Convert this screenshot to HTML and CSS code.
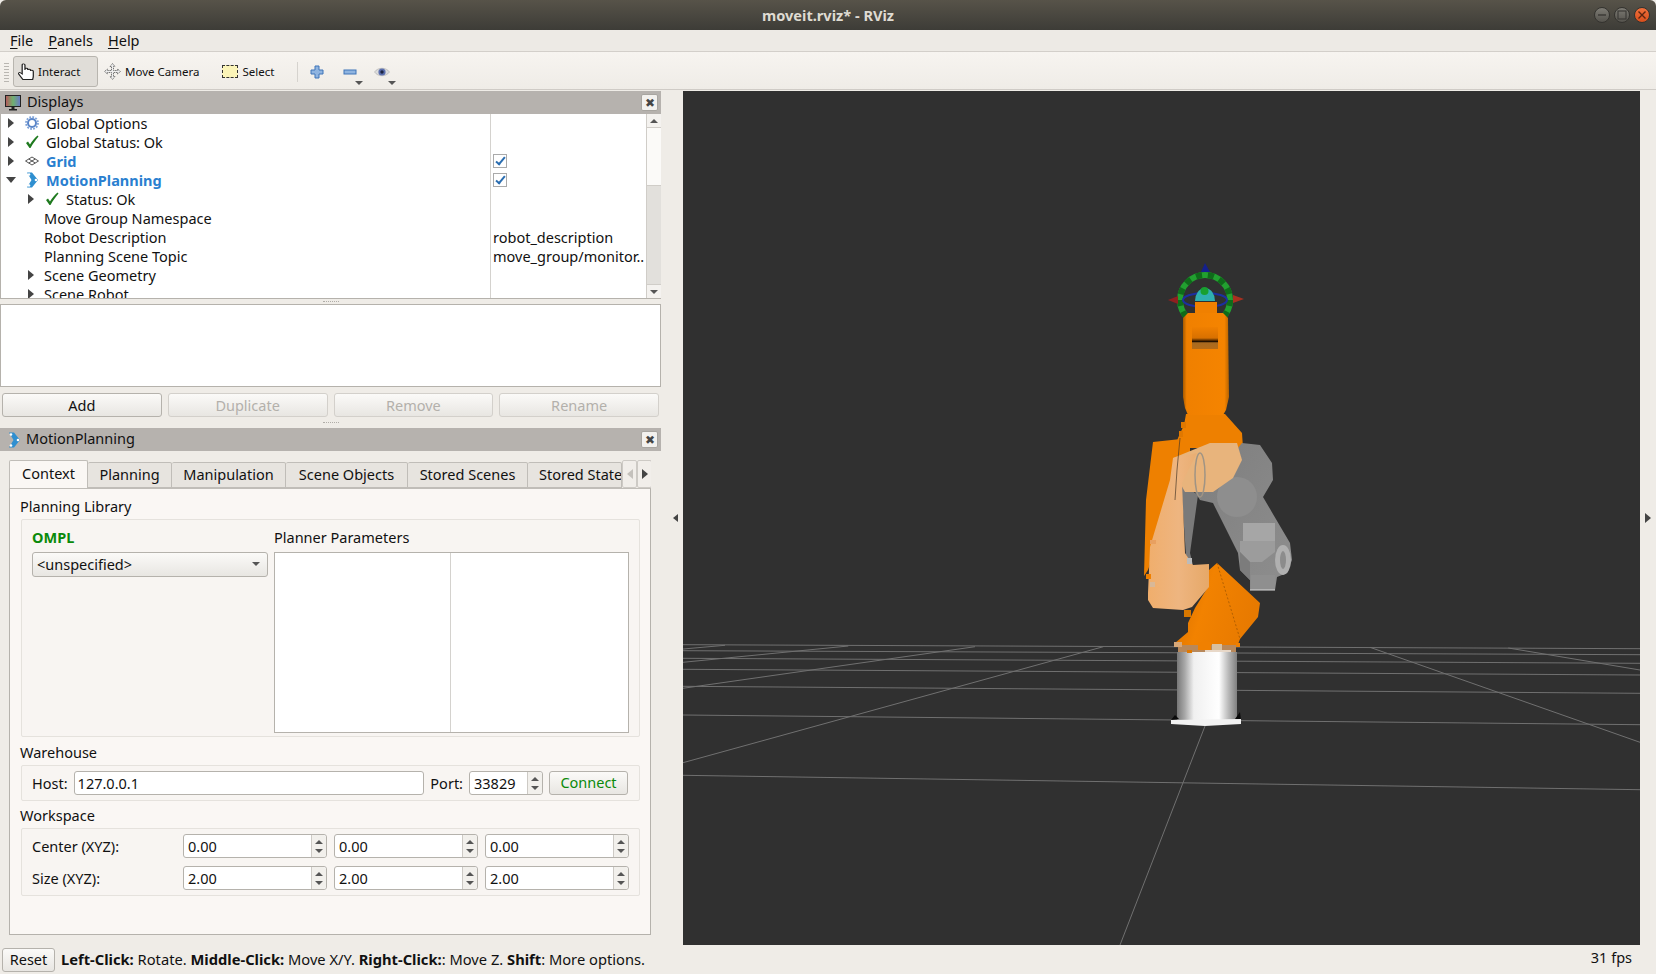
FILE: index.html
```html
<!DOCTYPE html>
<html lang="en">
<head>
  <meta charset="UTF-8" />
  <title>moveit.rviz* - RViz</title>
  <link rel="stylesheet" href="styles.css">
</head>
<body>

  <svg class="defs" width="0" height="0">
    <symbol id="check" viewBox="0 0 14 14"><path d="M1 8 L3 6.500 L5 9.500 C7 6 9.500 3 12.500 0.500 L13.500 1.500 C10.500 5 8 8.500 5.500 13 L4.500 13 Z" fill="#1f7a1f"/></symbol>
    <symbol id="plan" viewBox="0 0 14 16"><path d="M2 0.500 L7 0.500 L13 8 L7 15.500 L2 15.500 L6.500 8 Z" fill="#2f8fd0"/><circle cx="4" cy="2.500" r="1.300" fill="#fff"/><circle cx="11" cy="8" r="1.300" fill="#fff"/><circle cx="4" cy="13.500" r="1.300" fill="#fff"/></symbol>
  </svg>

  <div class="titlebar">
    <span class="title">moveit.rviz* - RViz</span>
    <div class="winbtns">
      <span class="winbtn"><svg width="10" height="10"><path d="M1 5 H9" stroke="#3c3b37" stroke-width="1.500"/></svg></span>
      <span class="winbtn"><svg width="10" height="10"><rect x="1" y="1" width="8" height="8" fill="none" stroke="#3c3b37" stroke-width="1.200"/></svg></span>
      <span class="winbtn close"><svg width="10" height="10"><path d="M1.500 1.500 L8.500 8.500 M8.500 1.500 L1.500 8.500" stroke="#5a2410" stroke-width="1.400"/></svg></span>
    </div>
  </div>

  <div class="menubar">
    <span><u>F</u>ile</span>
    <span><u>P</u>anels</span>
    <span><u>H</u>elp</span>
  </div>

  <div class="toolbar">
    <div class="grip"></div>
    <div class="toolbtn active">
      <svg width="16" height="17" viewBox="1.500 0 11.500 17" preserveAspectRatio="none"><path d="M5 16.500 L2 11 C1.500 10 2.500 9 3.500 10 L4.500 11 L4.500 2 C4.500 0.500 6.500 0.500 6.500 2 L6.500 7 L6.500 6 C6.500 5 8.500 5 8.500 6 L8.500 7 C8.500 6 10.500 6 10.500 7 L10.500 8 C10.500 7 12.500 7 12.500 8.500 L12.500 13 C12.500 15 12 16 12 16.500 Z" fill="#fff" stroke="#222" stroke-width="0.900"/></svg>
      Interact
    </div>
    <div class="toolbtn">
      <svg width="17" height="17" viewBox="0 0 17 17"><path d="M8.500 0.500 L11 3.500 L9.500 3.500 L9.500 7.500 L13.500 7.500 L13.500 6 L16.500 8.500 L13.500 11 L13.500 9.500 L9.500 9.500 L9.500 13.500 L11 13.500 L8.500 16.500 L6 13.500 L7.500 13.500 L7.500 9.500 L3.500 9.500 L3.500 11 L0.500 8.500 L3.500 6 L3.500 7.500 L7.500 7.500 L7.500 3.500 L6 3.500 Z" fill="#eee" stroke="#555" stroke-width="0.800" stroke-dasharray="1.500 0.700"/></svg>
      Move Camera
    </div>
    <div class="toolbtn">
      <span class="selbox"></span>
      Select
    </div>
    <div class="toolsep"></div>
    <div class="iconbtn">
      <svg width="14" height="14" viewBox="0 0 14 14"><path d="M5 1 H9 V5 H13 V9 H9 V13 H5 V9 H1 V5 H5 Z" fill="#8fb4e0" stroke="#3f74b8"/></svg>
    </div>
    <div class="iconbtn menu narrow">
      <svg width="14" height="14" viewBox="0 0 14 14"><rect x="1" y="5" width="12" height="4" fill="#8fb4e0" stroke="#3f74b8"/></svg>
      <i class="tri down small"></i>
    </div>
    <div class="iconbtn menu">
      <svg width="16" height="12" viewBox="0 0 16 12"><path d="M0.500 6 C4 1 12 1 15.500 6 C12 11 4 11 0.500 6 Z" fill="#dcdcdc" stroke="#aaa" stroke-width="0.600"/><circle cx="8" cy="6" r="3.600" fill="#5b6fae"/><circle cx="8" cy="6" r="1.700" fill="#1d2440"/></svg>
      <i class="tri down small"></i>
    </div>
  </div>

  <div class="main">
    <div class="leftcol">

      <div class="docktitle">
        <svg class="dockicon" width="16" height="16" viewBox="0 0 16 16">
          <defs><linearGradient id="scr" x1="0" x2="1" y1="0" y2="0"><stop offset="0" stop-color="#b8555a"/><stop offset="0.500" stop-color="#6fb06f"/><stop offset="1" stop-color="#6a78c8"/></linearGradient></defs>
          <rect x="0.500" y="0.500" width="15" height="11" fill="url(#scr)" stroke="#222"/>
          <path d="M6.500 12 H9.500 V14 H12 V15.500 H4 V14 H6.500 Z" fill="#222"/>
        </svg>
        <span class="dockname">Displays</span>
        <span class="dockclose">✖</span>
      </div>

      <div class="tree">
        <div class="treerows">
          <div class="row"><i class="tri right"></i><svg class="ticon" width="14" height="14" viewBox="0 0 14 14"><circle cx="7" cy="7" r="4" fill="none" stroke="#5b86c8" stroke-width="2" /><circle cx="7" cy="7" r="6" fill="none" stroke="#7fa3d8" stroke-width="1.800" stroke-dasharray="1.800 1.300"/></svg><span>Global Options</span></div>
          <div class="row"><i class="tri right"></i><svg class="ticon" width="14" height="14"><use href="#check"/></svg><span>Global Status: Ok</span></div>
          <div class="row"><i class="tri right"></i><svg class="ticon" width="14" height="14" viewBox="0 0 14 14"><path d="M7 3 L13.500 7 L7 11 L0.500 7 Z M3.800 5 L10.200 9 M10.200 5 L3.800 9" fill="none" stroke="#555" stroke-width="1"/></svg><span class="on">Grid</span><label class="cb"></label></div>
          <div class="row"><i class="tri down"></i><svg class="ticon" width="14" height="16"><use href="#plan"/></svg><span class="on">MotionPlanning</span><label class="cb"></label></div>
          <div class="row lvl2"><i class="tri right"></i><svg class="ticon" width="14" height="14"><use href="#check"/></svg><span>Status: Ok</span></div>
          <div class="row lvl2 noicon"><span>Move Group Namespace</span></div>
          <div class="row lvl2 noicon"><span>Robot Description</span><em class="val">robot_description</em></div>
          <div class="row lvl2 noicon"><span>Planning Scene Topic</span><em class="val">move_group/monitor..</em></div>
          <div class="row lvl2 noicon arrow"><i class="tri right"></i><span>Scene Geometry</span></div>
          <div class="row lvl2 noicon arrow"><i class="tri right"></i><span>Scene Robot</span></div>
        </div>
        <div class="vscroll">
          <div class="sbtn"><i class="tri up small"></i></div>
          <div class="thumb"></div>
          <div class="trough"></div>
          <div class="sbtn"><i class="tri down small"></i></div>
        </div>
      </div>

      <div class="hsplit"></div>
      <div class="descbox"></div>

      <div class="btnrow">
        <div class="btn">Add</div>
        <div class="btn off">Duplicate</div>
        <div class="btn off">Remove</div>
        <div class="btn off">Rename</div>
      </div>

      <div class="hsplit two"></div>

      <div class="docktitle">
        <svg class="dockicon plan" width="14" height="16"><use href="#plan"/></svg>
        <span class="dockname">MotionPlanning</span>
        <span class="dockclose">✖</span>
      </div>

      <div class="tabs">
        <div class="tab current">Context</div>
        <div class="tab w-planning">Planning</div>
        <div class="tab w-manip">Manipulation</div>
        <div class="tab w-objects">Scene Objects</div>
        <div class="tab w-scenes">Stored Scenes</div>
        <div class="tab w-states">Stored States</div>
        <div class="tabscroll"><i class="tri left faded"></i></div>
        <div class="tabscroll"><i class="tri right"></i></div>
      </div>

      <div class="pane">
        <div class="grouplabel">Planning Library</div>
        <div class="group library">
          <div class="libleft">
            <div class="ompl">OMPL</div>
            <div class="combo"><span>&lt;unspecified&gt;</span><i class="tri down small"></i></div>
          </div>
          <div class="libright">
            <div class="plabel">Planner Parameters</div>
            <div class="ptable"><div class="pcol"></div><div class="pcol"></div></div>
          </div>
        </div>

        <div class="grouplabel">Warehouse</div>
        <div class="group warehouse">
          <span class="lab">Host:</span>
          <div class="field host">127.0.0.1</div>
          <span class="lab">Port:</span>
          <div class="spin port"><span>33829</span><div class="steps"><i class="tri up small"></i><i class="tri down small"></i></div></div>
          <div class="btn connect">Connect</div>
        </div>

        <div class="grouplabel">Workspace</div>
        <div class="group workspace">
          <span class="lab">Center (XYZ):</span>
          <div class="spin"><span>0.00</span><div class="steps"><i class="tri up small"></i><i class="tri down small"></i></div></div>
          <div class="spin"><span>0.00</span><div class="steps"><i class="tri up small"></i><i class="tri down small"></i></div></div>
          <div class="spin"><span>0.00</span><div class="steps"><i class="tri up small"></i><i class="tri down small"></i></div></div>
          <span class="lab">Size (XYZ):</span>
          <div class="spin"><span>2.00</span><div class="steps"><i class="tri up small"></i><i class="tri down small"></i></div></div>
          <div class="spin"><span>2.00</span><div class="steps"><i class="tri up small"></i><i class="tri down small"></i></div></div>
          <div class="spin"><span>2.00</span><div class="steps"><i class="tri up small"></i><i class="tri down small"></i></div></div>
        </div>
      </div>
    </div>

    <div class="vsplit"><i class="tri left"></i></div>

    <div class="viewport">
      <svg class="scene" viewBox="683 91 957 854" width="957" height="854">
        <defs>
          <linearGradient id="link" x1="0" x2="1" y1="0" y2="0">
            <stop offset="0" stop-color="#a85a00"/><stop offset="0.080" stop-color="#f08000"/><stop offset="0.900" stop-color="#f58400"/><stop offset="1" stop-color="#b86400"/>
          </linearGradient>
          <linearGradient id="base" x1="0" x2="1" y1="0" y2="0">
            <stop offset="0" stop-color="#777"/><stop offset="0.130" stop-color="#a8a8a8"/><stop offset="0.280" stop-color="#f0f0f0"/><stop offset="0.700" stop-color="#fff"/><stop offset="0.860" stop-color="#b8b8b8"/><stop offset="1" stop-color="#808080"/>
          </linearGradient>
          <linearGradient id="lower" x1="0" x2="1" y1="0" y2="0.300">
            <stop offset="0" stop-color="#d26c00"/><stop offset="0.450" stop-color="#f28200"/><stop offset="1" stop-color="#e87a00"/>
          </linearGradient>
          <linearGradient id="light" x1="0" x2="1" y1="0" y2="0">
            <stop offset="0" stop-color="#f0ae6c"/><stop offset="0.500" stop-color="#eeb580"/><stop offset="1" stop-color="#e6a868"/>
          </linearGradient>
          <linearGradient id="slot" x1="0" x2="0" y1="0" y2="1">
            <stop offset="0" stop-color="#f08000"/><stop offset="0.500" stop-color="#d87000"/><stop offset="0.660" stop-color="#201000"/><stop offset="0.720" stop-color="#a86a20"/><stop offset="1" stop-color="#b46c18"/>
          </linearGradient>
          <linearGradient id="ghostfill" x1="0" x2="1" y1="0" y2="1">
            <stop offset="0" stop-color="#7e7e7e"/><stop offset="1" stop-color="#8e8e8e"/>
          </linearGradient>
        </defs>

        <g class="gridlines">
          <path d="M683 644.700 L1640 648.700"/>
          <path d="M683 650.700 L1640 654.700"/>
          <path d="M683 658.300 L1640 663.300"/>
          <path d="M683 669.300 L1640 675"/>
          <path d="M683 686.300 L1640 693.300"/>
          <path d="M683 715 L1640 724.700"/>
          <path d="M683 775.300 L1640 789.700"/>
          <path d="M1103.300 646.700 L683 762.700"/>
          <path d="M975 646.700 L683 688.300"/>
          <path d="M848.300 646 L683 662.300"/>
          <path d="M725 645.300 L683 649"/>
          <path d="M1205 726 L1120 945"/>
          <path d="M1370 647.300 L1640 742.300"/>
          <path d="M1508.300 648 L1640 670"/>
        </g>

        <g class="marker">
          <circle cx="1205" cy="300" r="25" fill="none" stroke="#22a030" stroke-width="6"/>
          <circle cx="1205" cy="300" r="25" fill="none" stroke="#0f6a1a" stroke-width="6" stroke-dasharray="6 6"/>
          <ellipse cx="1205" cy="300" rx="22" ry="7" fill="none" stroke="#1c2fa0" stroke-width="2"/>
          <path d="M1205 263 L1210 272 L1201 272 Z" fill="#14208c"/>
          <path d="M1168 300 L1178 296 L1178 304 Z" fill="#8e2020"/>
          <path d="M1244 299 L1233 295 L1233 303 Z" fill="#a83020"/>
          <path d="M1195 301 A10 13 0 0 1 1215 301 Z" fill="#2fb0b0"/>
          <circle cx="1204.500" cy="291" r="4" fill="#18a030"/>
        </g>

        <g class="robot">
          <path d="M1153 442 L1190 438 L1190 490 L1165 520 L1148 570 L1144 576 L1146 500 Z" fill="#ee8000"/>
          <path d="M1186 414 L1225 414 L1242 433 L1243 448 L1175 448 L1178 438 L1184 425 Z" fill="#ee8000"/>
          <path d="M1181 422 H1186 V428 H1181 Z M1179 431 H1183 V437 H1179 Z" fill="#e07800"/>
          <path d="M1195 302 H1217 V314 H1195 Z" fill="#f08000"/>
          <path d="M1183 318 L1188 313 L1223 313 L1228 318 L1229 397 L1226 410 L1223 415 L1188 415 L1185 408 L1183 397 Z" fill="url(#link)"/>
          <rect x="1192" y="327" width="26" height="22" fill="url(#slot)"/>

          <path d="M1217 563 L1260 603 L1258 617 L1240 639 L1237 647 L1177 647 L1175 643 L1188 632 L1188 623 L1195 608 L1208 587 L1209 570 Z" fill="url(#lower)"/>
          <path d="M1217 563 L1240 639" stroke="#8a4a00" stroke-width="0.600" stroke-dasharray="2 2" fill="none"/>
          <rect x="1177" y="652" width="60" height="68" fill="url(#base)"/>
          <path d="M1171 720 L1175 715 L1179 719 Z M1241 720 L1240 712 L1235 719 Z" fill="#0a0a0a"/>
          <path d="M1171 720 L1241 719 L1241 724 L1205 726 L1171 724 Z" fill="#f2f2f2"/>
          <rect x="1178" y="645" width="58" height="7" fill="#b8885a"/>
          <rect x="1198" y="642" width="13" height="8" fill="#f08000"/>
          <rect x="1174" y="642" width="8" height="5" fill="#d8a878"/>
          <rect x="1212" y="644" width="10" height="6" fill="#d8c0a0"/>
          <rect x="1236" y="643" width="4" height="4" fill="#f08000"/>
          <rect x="1187" y="650" width="5" height="3" fill="#e07800"/>
          <rect x="1205" y="650" width="26" height="2" fill="#e8d8c8"/>
          <rect x="1184" y="610" width="7" height="7" fill="#d87800"/>

          <g class="ghost">
            <path d="M1242 443 L1260 445 L1272 463 L1273 480 L1263 497 L1290 543 L1292 560 L1287 573 L1277 577 L1275 590 L1250 590 L1250 580 L1240 570 L1238 553 L1213 503 L1200 500 L1195 492 L1220 470 Z" fill="url(#ghostfill)"/>
            <circle cx="1237" cy="497" r="20" fill="#8e8e8e"/>
            <path d="M1181 483 L1198 495 L1190 553 L1193 565 L1186 555 Z" fill="#7a7a7a"/>
            <rect x="1243" y="523" width="32" height="18" fill="#a6a6a6"/>
            <path d="M1240 541 H1275 V552 L1262 562 H1250 L1240 552 Z" fill="#9c9c9c"/>
            <path d="M1240 552 L1250 562 V580 L1240 570 Z" fill="#7c7c7c"/>
            <ellipse cx="1283" cy="560" rx="8" ry="15" fill="#b0b0b0"/>
            <ellipse cx="1283" cy="560" rx="3" ry="9" fill="#8c8c8c"/>
            <rect x="1251" y="575" width="24" height="15" fill="#8f8f8f"/>
            <path d="M1250 590 H1275" stroke="#d8d8d8" stroke-width="1"/>
          </g>

          <path d="M1173 458 L1210 443 L1237 443 L1242 460 L1233 478 L1213 492 L1185 492 L1180 483 Z" fill="#e8b47c"/>
          <path d="M1173 458 L1197 453 L1182 483 L1185 553 L1193 565 L1209 564 L1209 587 L1192 607 L1183 610 L1153 608 L1148 600 L1148 593 L1150 547 L1170 480 Z" fill="url(#light)"/>
          <ellipse cx="1200" cy="475" rx="5" ry="22" fill="none" stroke="#a09484" stroke-width="1.500"/>
          <path d="M1180 438 L1177 470 L1175 500" stroke="#4a3a28" stroke-width="0.700" fill="none"/>
          <rect x="1146" y="574" width="5" height="5" fill="#f08000"/>
          <rect x="1150" y="540" width="6" height="4" fill="#e8a060"/>
          <rect x="1150" y="582" width="5" height="5" fill="#d8b898"/>
          <rect x="1187" y="558" width="5" height="6" fill="#bbb"/>
        </g>
      </svg>
    </div>

    <div class="vsplit right"><i class="tri right"></i></div>
  </div>

  <div class="statusbar">
    <div class="btn reset">Reset</div>
    <div class="hint"><b>Left-Click:</b> Rotate. <b>Middle-Click:</b> Move X/Y. <b>Right-Click:</b>: Move Z. <b>Shift</b>: More options.</div>
    <div class="fps">31 fps</div>
  </div>

</body>
</html>
```

FILE: styles.css
```css
html, body {
  margin: 0;
  padding: 0;
}

body {
  width: 1656px;
  height: 974px;
  overflow: hidden;
  display: flex;
  flex-direction: column;
  background-color: #efece7;
  color: #111;
  font-family: "Noto Sans", sans-serif;
  font-size: 14.500px;
}

.defs {
  position: absolute;
}

/* small triangles used all over the place */
.tri {
  display: block;
  flex: none;
  width: 0;
  height: 0;
  border-style: solid;
  border-color: transparent;
}

.tri.right {
  border-width: 5px 0 5px 6px;
  border-left-color: #444;
}

.tri.left {
  border-width: 5px 6px 5px 0;
  border-right-color: #444;
}

.tri.down {
  border-width: 6px 5px 0 5px;
  border-top-color: #444;
}

.tri.up {
  border-width: 0 5px 6px 5px;
  border-bottom-color: #444;
}

.tri.down.small {
  border-width: 4px 4px 0 4px;
  border-top-color: #555;
}

.tri.up.small {
  border-width: 0 4px 4px 4px;
  border-bottom-color: #555;
}

.tri.faded {
  border-right-color: #c4c1bc;
}

/* title bar */
.titlebar {
  flex: none;
  height: 30px;
  display: flex;
  align-items: center;
  justify-content: center;
  position: relative;
  background: linear-gradient(#575349, #3d3c37);
  border-radius: 6px 6px 0 0;
}

.title {
  color: #dfdbd2;
  font-weight: bold;
  font-size: 14.600px;
}

.winbtns {
  position: absolute;
  right: 6px;
  top: 7px;
  display: flex;
  gap: 4px;
}

.winbtn {
  width: 16px;
  height: 16px;
  box-sizing: border-box;
  border-radius: 50%;
  background: linear-gradient(#7d7b74, #55534d);
  border: 1px solid #34332f;
  display: flex;
  align-items: center;
  justify-content: center;
}

.winbtn.close {
  background: linear-gradient(#f0703c, #d84f1c);
}

/* menu */
.menubar {
  flex: none;
  height: 20px;
  padding: 0 0 1px 10px;
  display: flex;
  align-items: center;
  gap: 15px;
  background-color: #edeae5;
  border-bottom: 1px solid #d3cfca;
}

.menubar u {
  text-underline-offset: 2px;
}

/* toolbar */
.toolbar {
  flex: none;
  height: 35px;
  padding-top: 2px;
  display: flex;
  align-items: center;
  background: linear-gradient(#f7f4f0, #efece7);
  border-bottom: 1px solid #cfcbc6;
  font-size: 11.500px;
}

.grip {
  width: 5px;
  height: 20px;
  margin: 0 4px;
  background-image: radial-gradient(#b9b6b1 45%, transparent 50%);
  background-size: 2px 3px;
}

.toolbtn {
  height: 31px;
  box-sizing: border-box;
  display: flex;
  align-items: center;
  gap: 4px;
  padding: 0 6px 1px 4px;
  border: 1px solid transparent;
}

.toolbtn.active {
  width: 85px;
  background-color: #e0ddd8;
  border-color: #b8b5af;
  border-radius: 3px;
  margin-right: 1px;
}

.selbox {
  width: 16px;
  height: 13px;
  box-sizing: border-box;
  background-color: #fbf4b8;
  border: 1px dashed #333;
  margin-left: 11px;
}

.toolsep {
  width: 1px;
  height: 20px;
  margin: 0 12px 0 16px;
  background-color: #d6d3ce;
}

.iconbtn {
  width: 33px;
  height: 26px;
  display: flex;
  align-items: center;
  position: relative;
}

.iconbtn.narrow {
  width: 31px;
}

.iconbtn .tri {
  position: absolute;
  right: 11px;
  bottom: 0;
}

/* left column */
.main {
  flex: 1;
  display: flex;
  min-height: 0;
  padding-top: 1px;
}

.leftcol {
  flex: none;
  width: 661px;
  display: flex;
  flex-direction: column;
}

.docktitle {
  flex: none;
  height: 23px;
  box-sizing: border-box;
  display: flex;
  align-items: center;
  background-color: #b6b2ae;
  padding: 0 3px 0 5px;
}

.dockicon {
  flex: none;
  margin-right: 6px;
}

.dockicon.plan {
  margin-left: 2px;
  margin-right: 5px;
}

.dockname {
  flex: 1;
  line-height: 19px;
  margin-bottom: 2px;
}

.dockclose {
  width: 15px;
  height: 15px;
  background-color: #f3f1ee;
  border: 1px solid #a8a5a0;
  border-radius: 2px;
  font-size: 12px;
  line-height: 15px;
  text-align: center;
  color: #444;
}

.tree {
  flex: none;
  height: 184px;
  display: flex;
  background-color: #fff;
  border-left: 1px solid #b5b2ac;
  border-bottom: 1px solid #b5b2ac;
  overflow: hidden;
}

.treerows {
  flex: 1;
  background: linear-gradient(#d4d2ce, #d4d2ce) 489px 0 / 1px 100% no-repeat;
  overflow: hidden;
}

.row {
  height: 19px;
  box-sizing: border-box;
  padding-bottom: 2px;
  display: flex;
  align-items: center;
  position: relative;
  padding-left: 7px;
}

.row .tri.down {
  margin-left: -2px;
  margin-right: -2px;
}

.ticon {
  flex: none;
  margin: 0 7px 0 11px;
}

.row .on {
  color: #2a7fd0;
  font-weight: bold;
}

.row.lvl2 {
  padding-left: 27px;
}

.row.noicon {
  padding-left: 43px;
}

.row.noicon.arrow {
  padding-left: 27px;
}

.row.arrow .tri {
  margin-right: 10px;
}

.cb {
  position: absolute;
  left: 492px;
  top: 2px;
  width: 12px;
  height: 12px;
  background-color: #fff;
  border: 1px solid #aaa;
}

.cb::after {
  content: "";
  position: absolute;
  left: 4px;
  top: 0;
  width: 3px;
  height: 8px;
  border: solid #2a6db0;
  border-width: 0 2px 2px 0;
  transform: rotate(40deg);
}

.val {
  position: absolute;
  left: 492px;
  font-style: normal;
  white-space: nowrap;
}

.vscroll {
  flex: none;
  width: 14px;
  display: flex;
  flex-direction: column;
  border-left: 1px solid #d0cdc8;
}

.sbtn {
  flex: none;
  height: 13px;
  display: flex;
  align-items: center;
  justify-content: center;
  background-color: #f4f2ef;
}

.thumb {
  flex: none;
  height: 57px;
  background-color: #fbfaf8;
  border-top: 1px solid #d0cdc8;
  border-bottom: 1px solid #d0cdc8;
}

.trough {
  flex: 1;
  background-color: #e2e0dc;
  border-bottom: 1px solid #d0cdc8;
}

.hsplit {
  flex: none;
  height: 5px;
  display: flex;
  align-items: center;
  justify-content: center;
}

.hsplit::after {
  content: "";
  width: 16px;
  border-top: 1px dotted #b0ada8;
}

.hsplit.two {
  height: 11px;
}

.descbox {
  flex: none;
  height: 81px;
  background-color: #fff;
  border: 1px solid #b5b2ac;
}

.btnrow {
  flex: none;
  display: flex;
  gap: 6px;
  padding: 6px 2px 0;
}

.btn {
  flex: 1;
  height: 24px;
  box-sizing: border-box;
  display: flex;
  align-items: center;
  justify-content: center;
  background: linear-gradient(#fbfaf8, #e8e6e2);
  border: 1px solid #b5b2ac;
  border-radius: 3px;
}

.btn.off {
  color: #b3b0ab;
  border-color: #d3d0cb;
}

/* tabs */
.tabs {
  flex: none;
  height: 28px;
  display: flex;
  align-items: flex-end;
  margin: 9px 10px 0 9px;
  overflow: hidden;
}

.tab {
  flex: none;
  box-sizing: border-box;
  height: 26px;
  line-height: 22px;
  text-align: center;
  background-color: #e7e4df;
  border: 1px solid #c0bdb8;
  border-left: 0;
  border-radius: 2px 2px 0 0;
}

.tab.current {
  width: 79px;
  height: 28px;
  line-height: 24px;
  background-color: #faf7f4;
  border-left: 1px solid #c0bdb8;
  border-bottom: 0;
}

.w-planning { width: 84px; }
.w-manip { width: 114px; }
.w-objects { width: 122px; }
.w-scenes { width: 120px; }

.tab.w-states {
  width: 94px;
  padding-left: 11px;
  text-align: left;
  white-space: nowrap;
  overflow: hidden;
}

.tabscroll {
  flex: none;
  width: 15px;
  height: 28px;
  box-sizing: border-box;
  display: flex;
  align-items: center;
  justify-content: center;
  background-color: #f1eeea;
  border: 1px solid #cdcac5;
  border-radius: 2px;
}

.pane {
  flex: none;
  box-sizing: border-box;
  height: 447px;
  margin: 0 10px 0 9px;
  padding: 7px 10px 0;
  background-color: #faf7f4;
  border: 1px solid #b5b2ac;
  border-top-color: #c0bdb8;
}

.grouplabel {
  height: 23px;
  line-height: 20px;
}

.group {
  box-sizing: border-box;
  margin-left: 1px;
  background-color: #f8f5f2;
  border: 1px solid #e5e2dd;
  border-radius: 2px;
}

.library {
  height: 218px;
  display: flex;
  padding: 7px 10px 3px 10px;
  gap: 6px;
  margin-bottom: 5px;
}

.libleft {
  width: 236px;
}

.ompl {
  color: #0a8a0a;
  font-weight: bold;
  height: 25px;
  line-height: 20px;
}

.combo {
  height: 25px;
  box-sizing: border-box;
  display: flex;
  align-items: center;
  justify-content: space-between;
  padding: 0 7px 2px 4px;
  background: linear-gradient(#fbfaf8, #e8e6e2);
  border: 1px solid #b5b2ac;
  border-radius: 3px;
}

.libright {
  flex: 1;
}

.plabel {
  height: 25px;
  line-height: 20px;
}

.ptable {
  height: 181px;
  box-sizing: border-box;
  display: flex;
  background-color: #fff;
  border: 1px solid #b5b2ac;
}

.pcol {
  width: 175px;
  border-right: 1px solid #d4d2ce;
}

.pcol:last-child {
  flex: 1;
  border-right: 0;
}

.warehouse {
  height: 36px;
  display: flex;
  align-items: center;
  gap: 6px;
  padding: 0 11px 0 10px;
  margin-bottom: 4px;
}

.lab {
  flex: none;
}

.field {
  flex: 1;
  height: 24px;
  box-sizing: border-box;
  line-height: 22px;
  padding-left: 3px;
  background-color: #fff;
  border: 1px solid #b5b2ac;
  border-radius: 3px;
}

.spin {
  height: 24px;
  box-sizing: border-box;
  display: flex;
  align-items: center;
  justify-content: space-between;
  padding-left: 4px;
  background-color: #fff;
  border: 1px solid #b5b2ac;
  border-radius: 3px;
}

.spin.port {
  flex: none;
  width: 74px;
}

.steps {
  width: 14px;
  height: 22px;
  display: flex;
  flex-direction: column;
  align-items: center;
  justify-content: center;
  gap: 5px;
  background-color: #f2f0ec;
  border-left: 1px solid #cdcac5;
  border-radius: 0 3px 3px 0;
}

.btn.connect {
  flex: none;
  width: 79px;
  padding-bottom: 2px;
  color: #0a8a0a;
}

.workspace {
  height: 68px;
  display: grid;
  grid-template-columns: 144px 144px 144px 144px;
  grid-template-rows: 24px 24px;
  column-gap: 7px;
  row-gap: 8px;
  align-items: center;
  padding: 5px 11px 0 10px;
}

.workspace .lab {
  margin-right: -7px;
}

/* 3d view */
.vsplit {
  flex: none;
  width: 22px;
  box-sizing: border-box;
  display: flex;
  align-items: center;
  justify-content: center;
  padding-left: 6px;
}

.vsplit.right {
  width: 16px;
  padding-left: 0;
}

.vsplit .tri.left {
  border-width: 4px 5px 4px 0;
}

.viewport {
  flex: none;
  width: 957px;
  height: 854px;
  background-color: #303030;
}

.scene {
  display: block;
}

.gridlines path {
  stroke: #707070;
  stroke-width: 1;
  fill: none;
}

/* status bar */
.statusbar {
  flex: none;
  height: 29px;
  display: flex;
  align-items: center;
  padding: 0 24px 0 2px;
}

.btn.reset {
  flex: none;
  width: 53px;
  height: 24px;
  padding-bottom: 2px;
  margin-top: 1px;
  margin-right: 6px;
}

.hint {
  flex: 1;
  font-size: 14.700px;
  line-height: 18px;
  margin-bottom: 1px;
}

.fps {
  margin-top: -6px;
}
```
